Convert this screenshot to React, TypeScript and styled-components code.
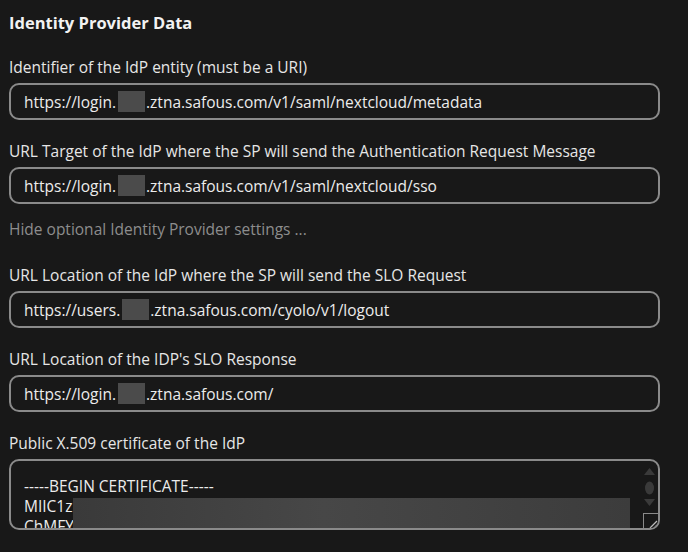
import React from "react";
import styled, { createGlobalStyle } from "styled-components";

const Global = createGlobalStyle`
  html, body { margin: 0; padding: 0; background: #181818; }
  body { font-family: "Open Sans", "Noto Sans", sans-serif; color: #e8e8e8; }
`;

const Page = styled.div`
  width: 688px;
  height: 552px;
  overflow: hidden;
  box-sizing: border-box;
  padding: 13px 28px 0 9px;
  display: flex;
  flex-direction: column;
  background: #181818;
`;

const Heading = styled.h2`
  margin: 0 0 24px 0;
  font-size: 16.5px;
  line-height: 20px;
  font-weight: 700;
  color: #f2f2f2;
`;

const Field = styled.div`
  display: flex;
  flex-direction: column;
  gap: 6px;
  margin-bottom: 21px;
`;

const Label = styled.div`
  font-size: 15.5px;
  line-height: 20px;
  color: #e6e6e6;
  white-space: nowrap;
`;

const Input = styled.div`
  box-sizing: border-box;
  height: 37px;
  border: 2px solid #8a8a8a;
  border-radius: 10px;
  padding: 0 13px;
  display: flex;
  align-items: center;
  font-size: 15.5px;
  color: #ececec;
  white-space: nowrap;
`;

const Redact = styled.span`
  display: inline-block;
  width: 27px;
  height: 21px;
  background: #4b4b4b;
  vertical-align: middle;
  margin: 0 1px 0 2px;
`;

const Toggle = styled.div`
  font-size: 15.5px;
  line-height: 20px;
  color: #8d8d8d;
  margin: -6px 0 26px 0;
`;

const TextArea = styled.div`
  position: relative;
  box-sizing: border-box;
  height: 71px;
  border: 2px solid #8a8a8a;
  border-radius: 10px;
  padding: 15px 13px 0 13px;
  overflow: hidden;
  font-size: 15.5px;
  line-height: 20px;
  color: #ececec;
`;

const Line = styled.div`
  white-space: nowrap;
`;

const Blur = styled.div`
  position: absolute;
  left: 62px;
  top: 37px;
  width: 557px;
  height: 40px;
  background: linear-gradient(90deg, #3a3a3a 0%, #474747 45%, #424242 70%, #3c3c3c 100%);
`;

const ScrollCol = styled.div`
  position: absolute;
  right: 0;
  top: 0;
  width: 17px;
  height: 100%;
  display: flex;
  flex-direction: column;
  align-items: center;
`;

const Resizer = styled.div`
  position: absolute;
  right: -2px;
  bottom: -2px;
  width: 17px;
  height: 17px;
  border-left: 1px solid #8a8a8a;
  border-top: 1px solid #8a8a8a;
  box-sizing: border-box;
  background: #181818;
`;

const Svg = styled.svg`
  display: block;
`;

const rows = [
  {
    label: "Identifier of the IdP entity (must be a URI)",
    pre: "https://login.",
    post: ".ztna.safous.com/v1/saml/nextcloud/metadata",
  },
  {
    label: "URL Target of the IdP where the SP will send the Authentication Request Message",
    pre: "https://login.",
    post: ".ztna.safous.com/v1/saml/nextcloud/sso",
  },
];

const rows2 = [
  {
    label: "URL Location of the IdP where the SP will send the SLO Request",
    pre: "https://users.",
    post: ".ztna.safous.com/cyolo/v1/logout",
  },
  {
    label: "URL Location of the IDP's SLO Response",
    pre: "https://login.",
    post: ".ztna.safous.com/",
  },
];

const Row = ({ label, pre, post }: { label: string; pre: string; post: string }) => (
  <Field>
    <Label>{label}</Label>
    <Input>
      {pre}
      <Redact />
      {post}
    </Input>
  </Field>
);

export default function App() {
  return (
    <>
      <Global />
      <Page>
        <Heading>Identity Provider Data</Heading>
        {rows.map((r) => (
          <Row key={r.label} {...r} />
        ))}
        <Toggle>Hide optional Identity Provider settings ...</Toggle>
        {rows2.map((r) => (
          <Row key={r.label} {...r} />
        ))}
        <Field>
          <Label>Public X.509 certificate of the IdP</Label>
          <TextArea>
            <Line>-----BEGIN CERTIFICATE-----</Line>
            <Line>MIIC1z</Line>
            <Line>ChMFY</Line>
            <Blur />
            <ScrollCol>
              <Svg width="17" height="54" viewBox="0 0 17 54">
                <polygon points="3,14 14,14 8.5,7" fill="#3a3a3a" />
                <ellipse cx="8.5" cy="27" rx="4.5" ry="6.5" fill="#3a3a3a" />
                <polygon points="3,38 14,38 8.5,45" fill="#3a3a3a" />
              </Svg>
            </ScrollCol>
            <Resizer>
              <Svg width="16" height="16" viewBox="0 0 16 16">
                <line x1="6" y1="14" x2="13" y2="7" stroke="#bdbdbd" strokeWidth="1.3" />
                <line x1="10" y1="14" x2="13" y2="11" stroke="#bdbdbd" strokeWidth="1.3" />
              </Svg>
            </Resizer>
          </TextArea>
        </Field>
      </Page>
    </>
  );
}
